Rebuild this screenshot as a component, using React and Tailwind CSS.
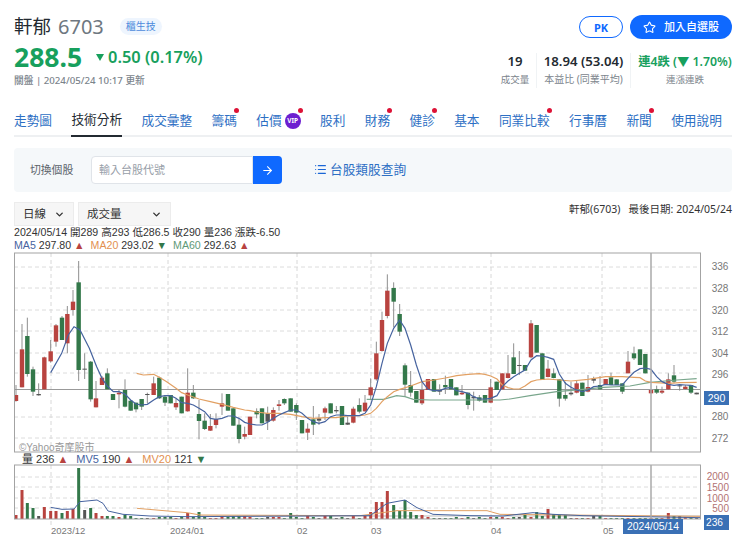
import React from 'react';
import { Star, ArrowRight, List, ChevronDown } from 'lucide-react';

const RED = '#b8433f';
const GREEN = '#33784a';
const DARK = '#555';

// [x, wickTop, wickBottom, bodyTop, bodyBottom, colour, volume], read from the chart in 3x crops
const seg1 = [
  [48,405,455,435,453,'r',4],[66,222,412,298,412,'r',29],[82,203,380,258,372,'g',16],[99,350,438,358,425,'g',11],
  [116,400,437,432,436,'d',3],[133,320,418,322,418,'r',12],[152,270,338,304,334,'r',8],[168,222,290,226,275,'r',8],
  [186,198,270,203,270,'g',6],[202,168,310,192,280,'r',8],[219,120,197,155,180,'r',10],[236,33,393,97,360,'g',51],
  [254,310,387,356,358,'d',9],[272,333,455,335,448,'g',11],[288,393,472,445,472,'r',6],[306,378,405,383,405,'r',3],
  [322,355,418,370,418,'g',3],[339,432,450,432,450,'g',3],[357,420,475,428,433,'r',2],[375,388,472,420,470,'g',4],
  [392,450,482,452,482,'g',3],[408,458,487,458,478,'g',1],[425,447,480,447,470,'g',1],[442,428,460,432,434,'d',1],
  [461,380,435,400,435,'r',1],[478,380,447,383,445,'g',2],[495,435,468,440,458,'g',2],[512,435,460,435,460,'g',2],
  [528,445,480,459,472,'r',1],[545,440,490,440,490,'g',2],[563,355,485,428,484,'r',6],[580,405,447,428,445,'g',2],
  [597,450,568,492,513,'g',7],[614,490,540,512,537,'g',2],[631,492,543,528,542,'r',1],[648,490,535,507,525,'r',1],
  [666,430,495,460,470,'r',3],[684,432,482,432,482,'g',2],[700,475,527,475,527,'g',3],[717,505,580,524,567,'g',3],
  [734,530,568,552,560,'r',3],
];
const seg2 = [
  [0,500,555,500,555,'r',2],[20,475,505,483,493,'g',1],[36,475,520,475,520,'g',1],[53,470,540,490,515,'d',2],
  [70,472,515,480,512,'r',2],[87,450,482,463,468,'r',2],[103,445,465,447,460,'g',1],[122,445,485,445,485,'g',6],
  [139,460,510,465,488,'g',2],[156,510,550,510,550,'g',1],[173,520,570,536,548,'r',3],[190,468,555,508,524,'g',2],
  [207,492,525,505,512,'d',1],[225,470,510,475,488,'r',3],[242,460,490,460,490,'g',3],[259,468,490,480,484,'d',1],
  [276,468,525,468,525,'g',2],[293,500,525,518,524,'d',1],[310,470,520,476,518,'r',3],[328,445,490,465,485,'g',1],
  [345,435,485,458,484,'r',3],[362,385,450,412,436,'r',7],[379,275,392,310,388,'r',17],[396,185,305,210,303,'r',17],
  [412,73,205,122,198,'r',28],[431,97,232,114,155,'g',14],[449,162,258,192,245,'g',8],[465,340,440,346,404,'g',19],
  [482,363,440,405,428,'g',7],[499,423,458,423,458,'g',4],[516,395,465,420,460,'r',4],[534,387,420,387,420,'r',2],
  [552,387,425,387,425,'g',1],[569,403,435,420,425,'d',1],[586,377,432,405,412,'g',1],[603,387,418,387,418,'g',1],
  [619,412,436,412,436,'g',2],[636,405,435,428,433,'r',1],[654,428,478,428,465,'g',2],[671,425,482,440,445,'d',1],
  [688,435,455,442,452,'g',2],[705,435,458,435,458,'g',1],[722,387,458,412,458,'r',2],
];
const seg3 = [
  [20,395,420,395,420,'g',2],[37,370,418,370,418,'r',2],[54,315,385,370,384,'r',1],[71,280,372,322,372,'g',2],
  [88,303,375,345,347,'d',2],[105,345,362,345,362,'g',4],[123,210,325,220,322,'r',2],[140,225,308,225,308,'g',7],
  [157,310,390,310,390,'g',3],[174,330,382,356,381,'r',10],[191,355,385,370,384,'g',5],[208,388,470,388,446,'g',4],
  [226,395,452,435,446,'g',4],[243,395,437,428,433,'d',1],[260,393,430,400,428,'r',1],[277,398,438,398,438,'g',1],
  [294,375,427,411,425,'r',1],[311,380,400,386,392,'d',3],[330,378,418,405,418,'g',3],[347,387,405,387,405,'r',1],
  [363,368,405,382,405,'g',1],[380,388,405,388,405,'g',1],[397,400,432,400,425,'g',1],[414,303,370,335,370,'r',1],
  [432,290,330,310,325,'g',1],[450,298,345,298,345,'g',1],[466,312,370,312,370,'g',1],[483,420,430,420,430,'r',1],
  [500,407,432,418,428,'g',1],[516,410,432,422,428,'r',1],[535,370,420,388,418,'r',6],[552,345,400,376,395,'g',3],
  [569,405,422,406,408,'d',3],[586,405,420,410,417,'r',2],[603,405,432,405,428,'g',2],[620,428,433,428,433,'d',1],
];

const place = (rows, x0) =>
  rows.map(([x, wt, wb, bt, bb, c, v]) => ({
    x: x0 + x / 3, wt: 250 + wt / 3, wb: 250 + wb / 3, bt: 250 + bt / 3, bb: 250 + bb / 3, c, v,
  }));
const candles = [...place(seg1, 0), ...place(seg2, 250), ...place(seg3, 490)];
const colourOf = { r: RED, g: GREEN, d: DARK };

const toPoints = (rows) => rows.map(([x, y, x0]) => `${x0 + x / 3},${250 + y / 3}`).join(' ');
const tag = (rows, x0) => rows.map(([x, y]) => [x, y, x0]);

const ma5 = toPoints([
  ...tag([[152,368],[185,310],[205,255],[222,230],[240,240],[268,295],[290,350],[306,385],[322,408],[340,425],[357,425],[375,432],[392,450],[408,462],[425,465],[442,463],[461,450],[478,440],[495,437],[512,437],[528,445],[545,458],[563,460],[580,465],[597,475],[614,485],[631,505],[648,508],[666,505],[684,498],[700,498],[717,505],[734,517]], 0),
  ...tag([[0,522],[20,525],[36,525],[53,517],[70,505],[87,495],[103,488],[122,480],[139,480],[156,490],[173,505],[190,515],[207,520],[225,515],[242,500],[259,495],[276,495],[293,497],[310,497],[328,497],[345,490],[362,465],[379,410],[396,340],[412,280],[431,235],[449,210],[465,235],[482,285],[499,345],[516,395],[534,418],[552,422],[569,422],[586,415],[603,412],[619,422],[636,425],[654,430],[671,440],[688,447],[705,447],[722,445],[741,437]], 250),
  ...tag([[37,410],[54,393],[71,380],[88,370],[105,360],[123,330],[140,317],[157,318],[174,322],[191,328],[208,372],[226,400],[243,412],[260,420],[277,425],[294,420],[311,410],[330,408],[347,403],[363,405],[380,405],[397,405],[414,385],[432,367],[450,356],[466,354],[483,358],[500,380],[516,395],[535,403],[552,406],[569,404],[586,405],[603,406],[620,412]], 490),
]);
const ma20 = toPoints([
  ...tag([[410,370],[430,375],[461,373],[478,382],[500,395],[528,415],[545,428],[563,435],[597,447],[631,455],[666,463],[700,472],[734,480]], 0),
  ...tag([[0,482],[20,486],[53,490],[87,490],[122,493],[156,500],[190,505],[225,503],[259,503],[293,498],[328,497],[345,495],[362,490],[379,475],[396,455],[412,440],[431,425],[449,418],[482,408],[516,395],[552,390],[586,384],[620,377],[654,373],[688,371],[705,373],[722,378],[741,387]], 250),
  ...tag([[37,405],[54,413],[71,417],[88,417],[105,408],[123,395],[140,390],[174,387],[208,390],[243,393],[294,388],[347,380],[397,380],[432,382],[450,383],[466,393],[483,397],[535,400],[569,398],[620,397]], 490),
]);
const ma60 = toPoints([
  ...tag([[350,448],[400,448],[440,437],[465,440],[490,448],[540,450],[600,450],[700,450]], 250),
  ...tag([[30,450],[60,447],[120,437],[200,425],[280,418],[340,412],[420,408],[480,397],[560,390],[620,386]], 490),
]);

const volPoints = (rows) => rows.map(([x, y]) => `${x},${445 + y / 3}`).join(' ');
const mv5 = volPoints([[50.7,187],[62,193],[74,192],[80,170],[97,165],[103,175],[108,198],[123,208],[150,213],[187,215],[300,213],[370,212],[387,175],[405,165],[417,188],[433,208],[470,212],[503,213],[533,203],[553,208],[583,212],[700,218]]);
const mv20 = volPoints([[137,190],[187,203],[200,210],[360,212],[370,208],[397,197],[487,197],[500,208],[700,214]]);

const priceGrid = [267, 288, 310, 331, 353, 373, 417, 438];
const volGrid = [477, 487, 498, 508];
const xGrid = [51, 168, 297, 371, 491, 602];
const priceLabels = [[336,266],[328,288],[320,310],[312,331],[304,353],[296,374],[280,416],[272,438]];
const volLabels = [[2000,476],[1500,487],[1000,498],[500,508]];
const dateLabels = [['2023/12',51],['2024/01',170],['02',297],['03',371],['04',491],['05',603]];

const tabs = [
  { name: '走勢圖' },
  { name: '技術分析', active: true },
  { name: '成交彙整' },
  { name: '籌碼', dot: true },
  { name: '估價', dot: true, vip: true },
  { name: '股利' },
  { name: '財務', dot: true },
  { name: '健診', dot: true },
  { name: '基本' },
  { name: '同業比較', dot: true },
  { name: '行事曆' },
  { name: '新聞', dot: true },
  { name: '使用說明' },
];

const Chart = () => (
  <svg width="718" height="284" viewBox="14 252 718 284" className="block" style={{ fontFamily: '"Liberation Sans", "Noto Sans CJK TC", sans-serif' }}>
    {priceGrid.map((y) => (
      <line key={y} x1="14" x2="700" y1={y} y2={y} stroke="#dcdcdc" strokeDasharray="4 3" />
    ))}
    {volGrid.map((y) => (
      <line key={y} x1="14" x2="700" y1={y} y2={y} stroke="#dcdcdc" strokeDasharray="4 3" />
    ))}
    {xGrid.map((x) => (
      <g key={x}>
        <line x1={x} x2={x} y1="253" y2="452" stroke="#d8d8d8" strokeDasharray="4 3" />
        <line x1={x} x2={x} y1="465" y2="525" stroke="#d8d8d8" strokeDasharray="4 3" />
      </g>
    ))}
    <line x1="14" x2="700" y1="389.5" y2="389.5" stroke="#999" />

    {candles.map((c, i) => (
      <g key={i}>
        <line x1={c.x} x2={c.x} y1={c.wt} y2={c.wb} stroke="#8f8f8f" />
        <rect x={c.x - 2.2} y={c.bt} width="4.4" height={Math.max(c.bb - c.bt, 1)} fill={colourOf[c.c]} />
      </g>
    ))}
    <polyline points={ma60} fill="none" stroke="#79a68c" strokeWidth="1.2" />
    <polyline points={ma20} fill="none" stroke="#e2a063" strokeWidth="1.2" />
    <polyline points={ma5} fill="none" stroke="#46639f" strokeWidth="1.2" />

    <rect x="14.5" y="253" width="686" height="199" fill="none" stroke="#a3a3a3" />
    <line x1="651" x2="651" y1="253" y2="452" stroke="#aaa" strokeWidth="1.5" />
    <text x="19" y="451" fontSize="10" fill="#999">©Yahoo奇摩股市</text>

    {priceLabels.map(([v, y]) => (
      <text key={v} x="720" y={y + 4} fontSize="10" fill="#777" textAnchor="middle">{v}</text>
    ))}
    <rect x="704" y="391" width="25" height="14" fill="#3a70b5" />
    <text x="716.5" y="402" fontSize="10.5" fill="#fff" textAnchor="middle">290</text>

    {/* volume panel */}
    <text x="22" y="463" fontSize="11" fill="#333">
      量 236 <tspan fill={RED}>▲</tspan>
      <tspan dx="8" fill="#46639f">MV5</tspan> 190 <tspan fill={RED}>▲</tspan>
      <tspan dx="8" fill="#e2904f">MV20</tspan> 121 <tspan fill={GREEN}>▼</tspan>
    </text>
    <line x1="200" x2="700" y1="516" y2="516" stroke="#bbb" />
    {candles.map((c, i) => (
      <rect key={i} x={c.x - 1.5} y={519 - c.v} width="3" height={c.v} fill={colourOf[c.c]} />
    ))}
    <polyline points={mv20} fill="none" stroke="#e2a063" />
    <polyline points={mv5} fill="none" stroke="#46639f" />
    <rect x="14.5" y="465" width="686" height="54" fill="none" stroke="#a3a3a3" />
    <line x1="651" x2="651" y1="465" y2="519" stroke="#aaa" strokeWidth="1.5" />
    {volLabels.map(([v, y]) => (
      <text key={v} x="729" y={y + 4} fontSize="10" fill="#b27272" textAnchor="end">{v}</text>
    ))}
    <rect x="704" y="515" width="25" height="15" fill="#3a70b5" />
    <text x="706" y="526" fontSize="10.2" fill="#fff">236</text>

    {dateLabels.map(([t, x]) => (
      <text key={t} x={x} y="534" fontSize="9.5" fill="#777">{t}</text>
    ))}
    <rect x="623" y="519" width="60" height="15" fill="#3a70b5" />
    <text x="653" y="530" fontSize="10.4" fill="#fff" textAnchor="middle">2024/05/14</text>
  </svg>
);

const App = () => {
  return (
    <div
      className="w-[740px] h-[540px] overflow-hidden bg-white pl-[14px] pr-[8px] text-[#232a31]"
      style={{ fontFamily: '"Noto Sans", "Noto Sans CJK TC", sans-serif' }}
    >
      {/* Stock header */}
      <div className="flex justify-between h-[104px] pt-[14px]">
        <div>
          <div className="flex items-center h-[25px]">
            <span className="text-[18.5px] leading-none">軒郁</span>
            <span className="ml-[7px] text-[20px] leading-none text-[#6e7780]">6703</span>
            <span className="ml-4 h-[17px] px-[6px] rounded-full bg-[#eef5fe] text-[#4d8bdc] text-[10px] leading-[17px]">櫃生技</span>
          </div>
          <div className="flex items-center h-[32px] mt-[2px]">
            <span className="text-[26.5px] leading-none font-bold text-[#17a05d]">288.5</span>
            <span className="ml-[14px] w-0 h-0 border-x-[4.5px] border-x-transparent border-t-[7px] border-t-[#17a05d]" />
            <span className="ml-1 text-[16.4px] leading-none font-semibold text-[#17a05d]">0.50 (0.17%)</span>
          </div>
          <div className="text-[9.7px] leading-none mt-[3px] text-[#7b848c] font-medium">關盤 | 2024/05/24 10:17 更新</div>
        </div>
        <div className="flex flex-col items-end mt-[1px]">
          <div className="flex items-center gap-[7px] h-[24px]">
            <button className="w-[44px] h-[22px] rounded-full border-[1.5px] border-[#0f69ff] text-[#0f69ff] text-[11px] font-bold leading-none">PK</button>
            <button className="w-[102px] h-[24px] rounded-full bg-[#0f69ff] text-white text-[11px] font-medium flex items-center justify-center gap-[8px]">
              <Star className="w-[13px] h-[13px]" strokeWidth={2} />
              加入自選股
            </button>
          </div>
          <div className="flex mt-[14px] h-[35px]">
            <div className="flex flex-col items-center w-[30px]">
              <span className="text-[13.2px] leading-[17px] font-semibold">19</span>
              <span className="text-[9.5px] leading-[15px] mt-[2px] text-[#7b848c]">成交量</span>
            </div>
            <div className="ml-[6px] flex flex-col items-center w-[95px] border-x border-[#f0f3f5]">
              <span className="text-[13.2px] leading-[17px] font-semibold whitespace-nowrap">18.94 (53.04)</span>
              <span className="text-[10px] leading-[15px] mt-[2px] text-[#7b848c]">本益比 (同業平均)</span>
            </div>
            <div className="flex flex-col items-center w-[101px] pl-[7px]">
              <span className="text-[12.3px] leading-[17px] font-semibold text-[#17a05d] whitespace-nowrap">連4跌 (▼ 1.70%)</span>
              <span className="text-[9.5px] leading-[15px] mt-[2px] text-[#7b848c]">連漲連跌</span>
            </div>
          </div>
        </div>
      </div>

      {/* Tabs */}
      <div className="flex gap-[19.35px] h-[33px] border-b-2 border-[#eef0f2]">
        {tabs.map((tab) => (
          <div
            key={tab.name}
            className={
              tab.active
                ? 'relative flex items-center gap-[3px] h-[33px] border-b-[2px] border-[#232a31] text-[#232a31] text-[12.7px] leading-none whitespace-nowrap'
                : 'relative flex items-center gap-[3px] h-[33px] text-[#2d6fc4] text-[12.7px] leading-none whitespace-nowrap'
            }
          >
            {tab.name}
            {tab.vip && (
              <span className="w-[16px] h-[16px] rounded-full bg-[#6d1fd0] text-white text-[6.5px] font-bold leading-[16px] text-center">VIP</span>
            )}
            {tab.dot && <span className="absolute right-[-2px] top-[4px] w-[5px] h-[5px] rounded-full bg-[#dd1236]" />}
          </div>
        ))}
      </div>

      {/* Search panel */}
      <div className="flex items-center h-[44px] mt-[11px] rounded bg-[#f5f8fa] pl-4">
        <span className="w-[61px] text-[10.8px] text-[#5b636a]">切換個股</span>
        <div className="flex h-[28px] w-[191px]">
          <div className="flex-1 flex items-center bg-white border border-[#e0e4e9] rounded-l pl-[7px] text-[11px] text-[#979ea8]">輸入台股代號</div>
          <div className="w-[29px] flex items-center justify-center bg-[#0f69ff] rounded-r text-white">
            <ArrowRight className="w-[13px] h-[13px]" strokeWidth={2} />
          </div>
        </div>
        <div className="ml-[32px] flex items-center gap-[3px] text-[12.7px] text-[#2d6fc4]">
          <List className="w-[13px] h-[13px] text-[#1a66d6]" strokeWidth={2.25} />
          台股類股查詢
        </div>
      </div>

      {/* Chart controls */}
      <div className="flex justify-between mt-[10px]">
        <div className="flex gap-[4px]">
          <div className="w-[60px] h-[24px] flex items-center justify-between px-2 bg-[#f6f6f6] border border-[#ececec] text-[11.5px] text-[#333]">
            日線
            <ChevronDown className="w-[11px] h-[11px]" strokeWidth={3} />
          </div>
          <div className="w-[93px] h-[24px] flex items-center justify-between px-2 bg-[#f6f6f6] border border-[#ececec] text-[11.5px] text-[#333]">
            成交量
            <ChevronDown className="w-[11px] h-[11px]" strokeWidth={3} />
          </div>
        </div>
        <div className="text-[10.5px] leading-[14px] text-[#333] whitespace-nowrap">軒郁(6703)&nbsp;&nbsp;&nbsp;最後日期: 2024/05/24</div>
      </div>

      {/* Legend */}
      <div className="text-[10.6px] leading-[13px] text-[#333] whitespace-nowrap" style={{ fontFamily: '"Liberation Sans", "Noto Sans CJK TC", sans-serif' }}>
        <div>2024/05/14 開289 高293 低286.5 收290 量236 漲跌-6.50</div>
        <div>
          <span className="text-[#46639f]">MA5</span> 297.80 <span className="text-[#b8433f]">▲</span>
          <span className="ml-[6px] text-[#e2904f]">MA20</span> 293.02 <span className="text-[#33784a]">▼</span>
          <span className="ml-[6px] text-[#5f9a78]">MA60</span> 292.63 <span className="text-[#b8433f]">▲</span>
        </div>
      </div>

      <Chart />
    </div>
  );
};

export default App;
